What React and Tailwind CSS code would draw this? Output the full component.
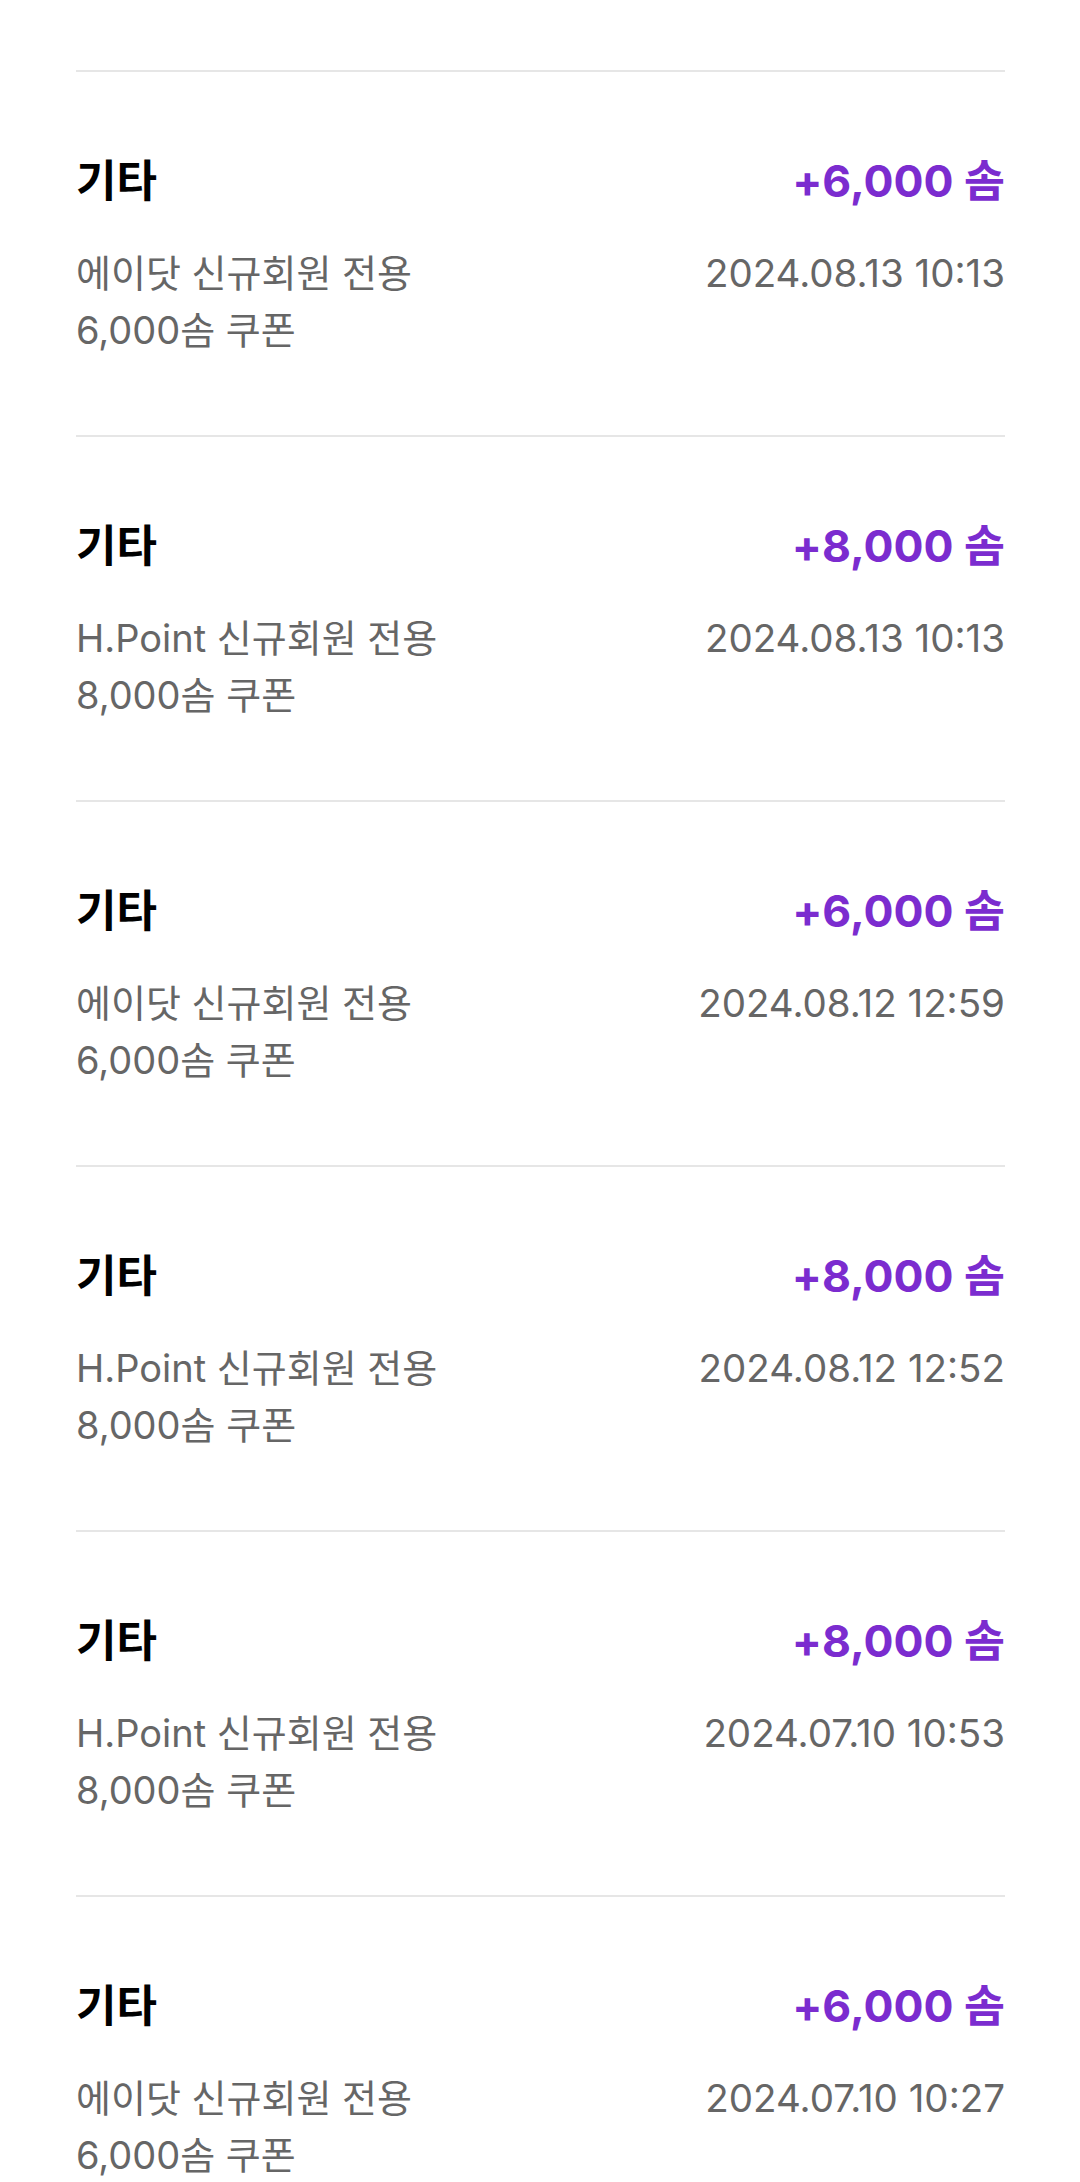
import React from "react";

const rows = [
  { amt: "+6,000", sub1: "에이닷 신규회원 전용", sub2: "6,000솜 쿠폰", date: "2024.08.13 10:13" },
  { amt: "+8,000", sub1: "H.Point 신규회원 전용", sub2: "8,000솜 쿠폰", date: "2024.08.13 10:13" },
  { amt: "+6,000", sub1: "에이닷 신규회원 전용", sub2: "6,000솜 쿠폰", date: "2024.08.12 12:59" },
  { amt: "+8,000", sub1: "H.Point 신규회원 전용", sub2: "8,000솜 쿠폰", date: "2024.08.12 12:52" },
  { amt: "+8,000", sub1: "H.Point 신규회원 전용", sub2: "8,000솜 쿠폰", date: "2024.07.10 10:53" },
  { amt: "+6,000", sub1: "에이닷 신규회원 전용", sub2: "6,000솜 쿠폰", date: "2024.07.10 10:27" },
];

export default function App() {
  return (
    <div
      className="w-[1080px] h-[2182px] overflow-hidden bg-white pt-[70px] pl-[76px] pr-[75px]"
      style={{ fontFamily: '"Inter", "Noto Sans CJK KR", sans-serif' }}
    >
      {rows.map((r, i) => (
        <div key={i} className="border-t-2 border-[#e6e6e6] pt-[79px] pb-[76px]">
          <div className="flex items-center justify-between h-[60px]">
            <span className="text-[44px] font-bold text-black leading-[60px]">기타</span>
            <span className="text-[44.5px] font-bold text-[#7b2ccf] leading-[60px]">
              {r.amt} 솜
            </span>
          </div>
          <div className="mt-[34px] flex justify-between leading-[57px] text-[#666666]">
            <div className="text-[38px]">
              <div>{r.sub1}</div>
              <div>{r.sub2}</div>
            </div>
            <div className="text-[38.5px]">{r.date}</div>
          </div>
        </div>
      ))}
    </div>
  );
}
